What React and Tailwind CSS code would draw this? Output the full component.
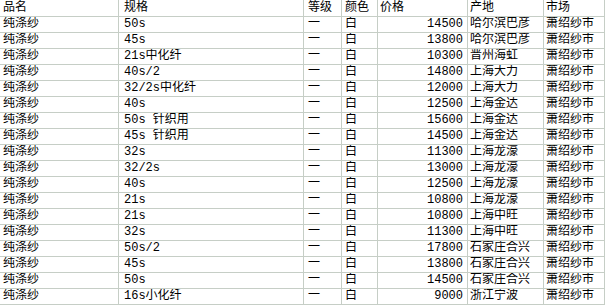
const rows = [
  ["纯涤纱", "50s", "一", "白", "14500", "哈尔滨巴彦", "萧绍纱市"],
  ["纯涤纱", "45s", "一", "白", "13800", "哈尔滨巴彦", "萧绍纱市"],
  ["纯涤纱", "21s中化纤", "一", "白", "10300", "晋州海虹", "萧绍纱市"],
  ["纯涤纱", "40s/2", "一", "白", "14800", "上海大力", "萧绍纱市"],
  ["纯涤纱", "32/2s中化纤", "一", "白", "12000", "上海大力", "萧绍纱市"],
  ["纯涤纱", "40s", "一", "白", "12500", "上海金达", "萧绍纱市"],
  ["纯涤纱", "50s 针织用", "一", "白", "15600", "上海金达", "萧绍纱市"],
  ["纯涤纱", "45s 针织用", "一", "白", "14500", "上海金达", "萧绍纱市"],
  ["纯涤纱", "32s", "一", "白", "11300", "上海龙濠", "萧绍纱市"],
  ["纯涤纱", "32/2s", "一", "白", "13000", "上海龙濠", "萧绍纱市"],
  ["纯涤纱", "40s", "一", "白", "12500", "上海龙濠", "萧绍纱市"],
  ["纯涤纱", "21s", "一", "白", "10800", "上海龙濠", "萧绍纱市"],
  ["纯涤纱", "21s", "一", "白", "10800", "上海中旺", "萧绍纱市"],
  ["纯涤纱", "32s", "一", "白", "11300", "上海中旺", "萧绍纱市"],
  ["纯涤纱", "50s/2", "一", "白", "17800", "石家庄合兴", "萧绍纱市"],
  ["纯涤纱", "45s", "一", "白", "13800", "石家庄合兴", "萧绍纱市"],
  ["纯涤纱", "50s", "一", "白", "14500", "石家庄合兴", "萧绍纱市"],
  ["纯涤纱", "16s小化纤", "一", "白", "9000", "浙江宁波", "萧绍纱市"],
];

const header = ["品名", "规格", "等级", "颜色", "价格", "产地", "市场"];

// column padding; price column is right aligned
const cellCls = [
  "pl-[3px]",
  "pl-[5px] whitespace-pre",
  "pl-[4px]",
  "pl-[3px]",
  "pr-[4px] text-right",
  "pl-[2px]",
  "pl-[2px]",
];

function Row({ cells, isHeader }) {
  return (
    <div
      className={`grid grid-cols-[119px_185px_38px_36px_90px_76px_61px] ${
        isHeader ? "h-[17px]" : "h-4"
      }`}
    >
      {cells.map((c, i) => (
        <div
          key={i}
          className={`border-r border-b border-[#c6cec6] overflow-hidden leading-[15px] ${
            isHeader ? (i === 4 ? "pl-[2px]" : cellCls[i].replace("pr-[4px] text-right", "")) : cellCls[i]
          } ${isHeader ? "pt-px" : ""}`}
        >
          {c}
        </div>
      ))}
    </div>
  );
}

export default function App() {
  return (
    <div
      className="w-[606px] h-[305px] bg-white text-black text-[12px] overflow-hidden"
      style={{ fontFamily: '"Liberation Mono", "Noto Sans CJK SC", monospace' }}
    >
      <Row cells={header} isHeader />
      {rows.map((r, i) => (
        <Row key={i} cells={r} />
      ))}
    </div>
  );
}
